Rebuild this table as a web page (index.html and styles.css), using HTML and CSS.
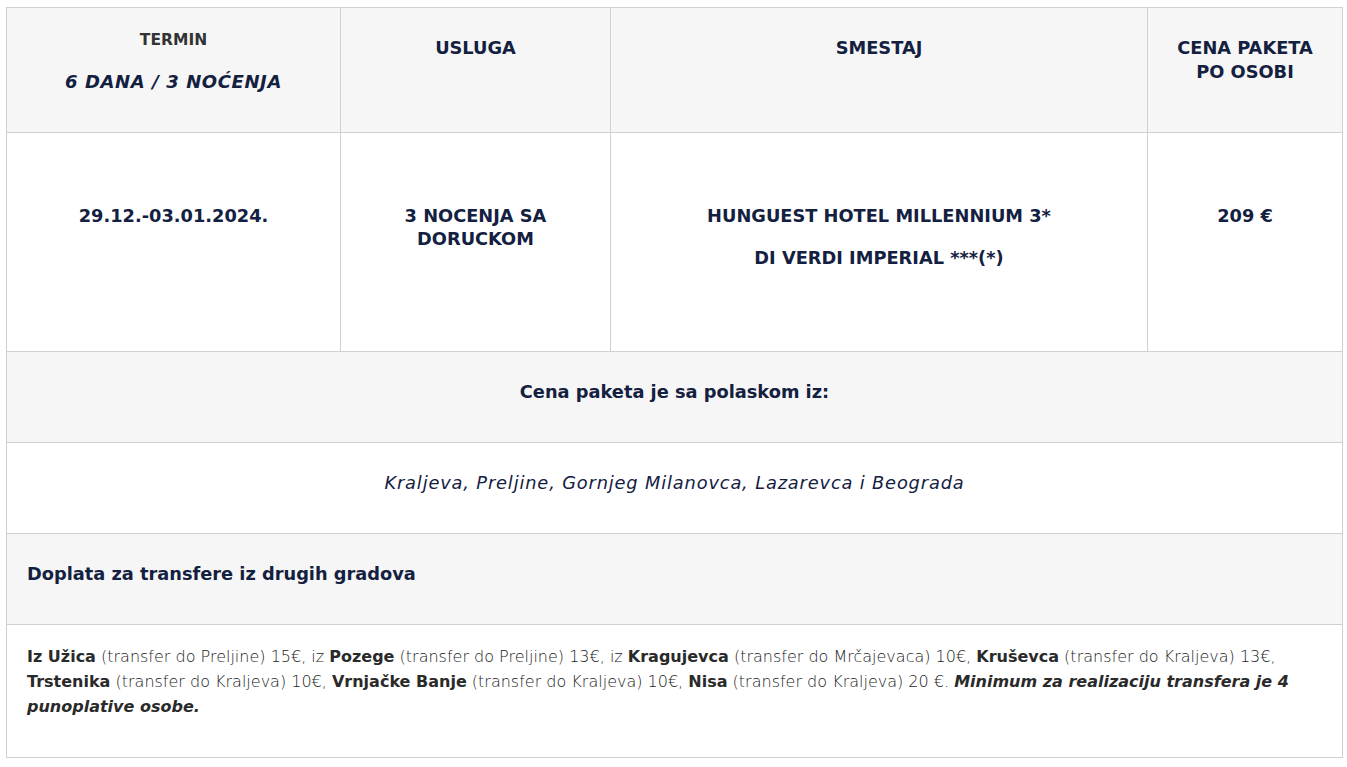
FILE: index.html
```html
<!DOCTYPE html>
<html lang="sr">
<head>
<meta charset="utf-8">
<title>Termin</title>
<link rel="stylesheet" href="styles.css">
</head>
<body>
<div class="wrap">
<table class="price-table">
  <colgroup>
    <col class="c1"><col class="c2"><col class="c3"><col class="c4">
  </colgroup>
  <tr class="head">
    <th class="h-termin">
      <div class="termin-label">TERMIN</div>
      <div class="termin-sub">6 DANA / 3 NOĆENJA</div>
    </th>
    <th>USLUGA</th>
    <th>SMESTAJ</th>
    <th>CENA PAKETA<br>PO OSOBI</th>
  </tr>
  <tr class="data">
    <td>29.12.-03.01.2024.</td>
    <td>3 NOCENJA SA<br>DORUCKOM</td>
    <td><div class="hotel">HUNGUEST HOTEL MILLENNIUM 3*</div><div class="hotel second">DI VERDI IMPERIAL ***(*)</div></td>
    <td>209 €</td>
  </tr>
  <tr class="band grey">
    <td colspan="4" class="center bold">Cena paketa je sa polaskom iz:</td>
  </tr>
  <tr class="band">
    <td colspan="4" class="center italic">Kraljeva, Preljine, Gornjeg Milanovca, Lazarevca i Beograda</td>
  </tr>
  <tr class="band grey">
    <td colspan="4" class="bold">Doplata za transfere iz drugih gradova</td>
  </tr>
  <tr class="notes">
    <td colspan="4"><b>Iz Užica</b> (transfer do Preljine) 15€, iz <b>Pozege</b> (transfer do Preljine) 13€, iz <b>Kragujevca</b> (transfer do Mrčajevaca) 10€, <b>Kruševca</b> (transfer do Kraljeva) 13€, <b>Trstenika</b> (transfer do Kraljeva) 10€, <b>Vrnjačke Banje</b> (transfer do Kraljeva) 10€, <b>Nisa</b> (transfer do Kraljeva) 20 €. <b><i>Minimum za realizaciju transfera je 4 punoplative osobe.</i></b></td>
  </tr>
</table>
</div>
</body>
</html>
```

FILE: styles.css
```css
html, body {
  margin: 0;
  padding: 0;
  background: #ffffff;
}
body {
  font-family: "DejaVu Sans", "Inter", sans-serif;
  color: #13203f;
}
.wrap {
  padding: 7px 5px 0 6px;
}
.price-table {
  width: 1336px;
  border-collapse: collapse;
  table-layout: fixed;
}
.c1 { width: 334px; }
.c2 { width: 270px; }
.c3 { width: 537px; }
.c4 { width: 195px; }
.price-table th,
.price-table td {
  border: 1px solid #d0d0d0;
  text-align: center;
  vertical-align: top;
}
.head th {
  background: #f6f6f6;
  height: 125px;
  box-sizing: border-box;
  padding: 28px 16px 0;
  font-size: 17.8px;
  font-weight: 700;
  line-height: 24px;
  color: #13203f;
}
.head th.h-termin {
  padding-top: 20px;
}
.termin-label {
  font-size: 15.5px;
  font-weight: 700;
  color: #333333;
  line-height: 24px;
}
.termin-sub {
  margin-top: 18px;
  font-style: italic;
  font-weight: 700;
  font-size: 18px;
  letter-spacing: 0.6px;
  line-height: 24px;
  color: #13203f;
}
.data td {
  height: 219px;
  box-sizing: border-box;
  padding: 71px 16px 0;
  font-size: 17.8px;
  font-weight: 700;
  line-height: 23px;
}
.hotel { line-height: 24px; }
.hotel.second { margin-top: 18px; }
.band td {
  height: 90px;
  box-sizing: border-box;
  padding: 28px 20px 38px;
  font-size: 17.8px;
  line-height: 24px;
}
.band.grey td { background: #f6f6f6; }
.band td:not(.center) { text-align: left; }
.bold { font-weight: 700; }
.italic {
  font-style: italic;
  font-weight: 400;
  font-size: 18px;
  letter-spacing: 0.85px;
}
.notes td {
  text-align: left;
  padding: 19px 20px 38px;
  font-size: 16px;
  font-weight: 200;
  line-height: 25px;
  color: #222222;
}
.notes b { font-weight: 700; color: #2a2a2a; }
```
